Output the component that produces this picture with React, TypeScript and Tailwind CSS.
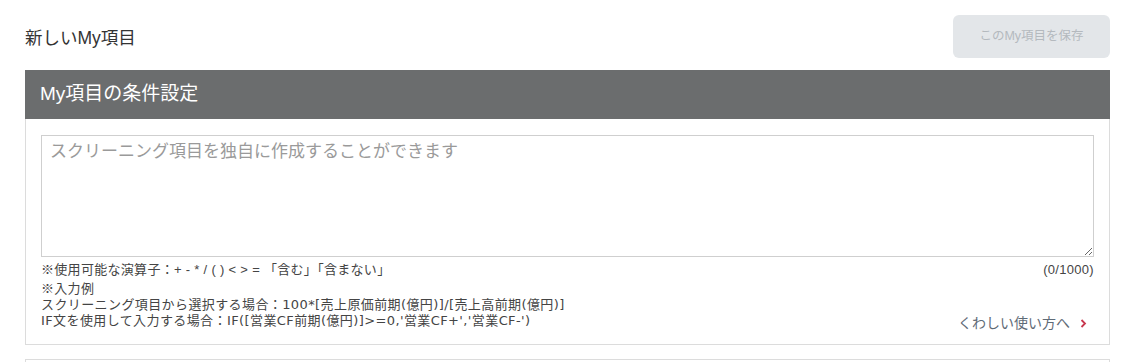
// New "My項目" editor: title row with the (disabled) save button, then the condition panel.

const FONT = {
  fontFamily: '"Liberation Sans", "Noto Sans CJK JP", sans-serif',
};

// The input examples use a wider Latin face so brackets and quotes take the room they do on the page.
const EXAMPLE_FONT = {
  fontFamily: '"DejaVu Sans", "Noto Sans CJK JP", sans-serif',
};

function ChevronRight() {
  return (
    <svg width="7" height="9" viewBox="0 0 7 9" className="ml-[10px]">
      <path d="M1.5 1 L5 4.5 L1.5 8" fill="none" stroke="#c8384e" strokeWidth="1.8" />
    </svg>
  );
}

export default function App() {
  return (
    <div className="w-[1140px] h-[362px] bg-white overflow-hidden text-[#333]" style={FONT}>
      <div className="ml-[25px] w-[1085px]">
        <div className="flex items-center justify-between pt-[15px]">
          <h1 className="text-[17.5px] text-[#333] mt-[3px]">新しいMy項目</h1>
          <button
            disabled
            className="h-[43px] w-[157px] rounded-[6px] bg-[#e3e6e9] text-[12.5px] text-[#b4b9be]"
          >
            このMy項目を保存
          </button>
        </div>

        <section className="mt-[12px]">
          <div className="h-[49px] bg-[#6b6d6e] flex items-center px-[15px]">
            <h2 className="text-[19px] text-white">My項目の条件設定</h2>
          </div>
          <div className="border border-t-0 border-[#dcdcdc] px-[15px] pt-[16px] pb-[15px]">
            <textarea
              className="block w-full h-[122px] border border-[#cfcfcf] px-[8px] py-[4px] text-[17px] leading-[24px] placeholder:text-[#9a9a9a] outline-none resize-y"
              placeholder="スクリーニング項目を独自に作成することができます"
            />
            <div className="mt-[5px] flex justify-between text-[13px] tracking-[0.3px] leading-[16px] text-[#444]">
              <span>※使用可能な演算子：+ - * / ( ) &lt; &gt; = 「含む」「含まない」</span>
              <span>(0/1000)</span>
            </div>
            <div className="mt-[3px] flex justify-between items-end text-[13px] leading-[16px] text-[#444]">
              <div>
                <p className="tracking-[0.3px]">※入力例</p>
                <div className="tracking-[0.4px]" style={EXAMPLE_FONT}>
                  <p>スクリーニング項目から選択する場合：100*[売上原価前期(億円)]/[売上高前期(億円)]</p>
                  <p>IF文を使用して入力する場合：IF([営業CF前期(億円)]&gt;=0,'営業CF+','営業CF-')</p>
                </div>
              </div>
              <a className="flex items-center text-[14px] text-[#5f6b77] mb-[-2px] mr-[7px]">
                くわしい使い方へ
                <ChevronRight />
              </a>
            </div>
          </div>
        </section>

        <div className="mt-[14px] h-[10px] border border-b-0 border-[#dcdcdc]" />
      </div>
    </div>
  );
}
